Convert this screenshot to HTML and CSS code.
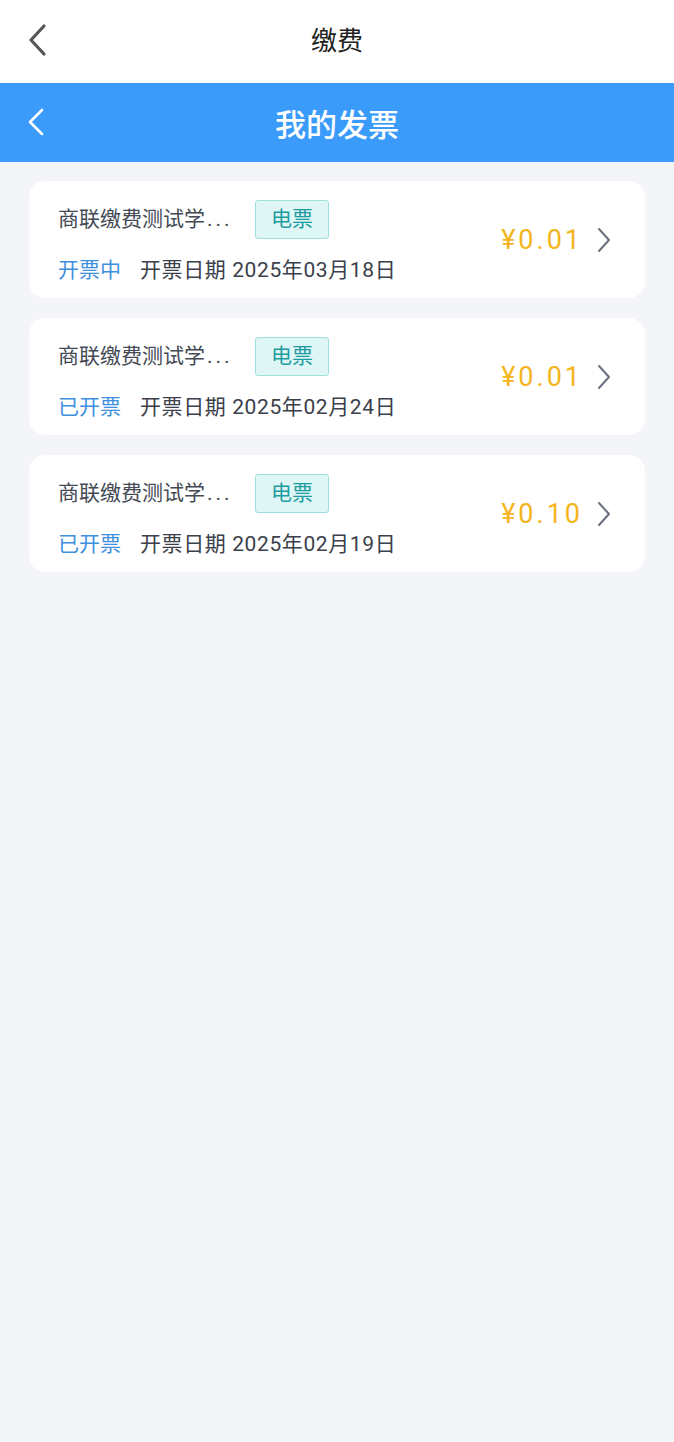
FILE: index.html
```html
<!DOCTYPE html>
<html lang="zh-CN">
<head>
    <meta charset="UTF-8">
    <meta name="viewport" content="width=device-width, initial-scale=1.0">
    <title>我的发票</title>
    <link rel="stylesheet" href="styles.css">
</head>
<body>
    <div class="top-bar">
        <svg class="back" width="22" height="34" viewBox="0 0 22 34"><path d="M18 3 L5 17 L18 31" fill="none" stroke="#555" stroke-width="3.2" stroke-linecap="round" stroke-linejoin="round"/></svg>
        <div class="top-title">缴费</div>
    </div>
    <div class="header">
        <svg class="back" width="22" height="30" viewBox="0 0 22 30"><path d="M17 3 L5 15 L17 27" fill="none" stroke="#fff" stroke-width="2.6" stroke-linecap="round" stroke-linejoin="round"/></svg>
        <div class="header-title">我的发票</div>
    </div>
    <div class="list">
        <div class="card">
            <div class="info">
                <div class="row first">
                    <span class="name">商联缴费测试学<span class="dots">...</span></span>
                    <span class="tag">电票</span>
                </div>
                <div class="row">
                    <span class="status">开票中</span>
                    <span class="date">开票日期 2025年03月18日</span>
                </div>
            </div>
            <div class="amount">¥0.01</div>
            <svg class="arrow" width="14" height="26" viewBox="0 0 14 26"><path d="M2 2 L12 13 L2 24" fill="none" stroke="#6b7080" stroke-width="2" stroke-linecap="round" stroke-linejoin="round"/></svg>
        </div>
        <div class="card">
            <div class="info">
                <div class="row first">
                    <span class="name">商联缴费测试学<span class="dots">...</span></span>
                    <span class="tag">电票</span>
                </div>
                <div class="row">
                    <span class="status">已开票</span>
                    <span class="date">开票日期 2025年02月24日</span>
                </div>
            </div>
            <div class="amount">¥0.01</div>
            <svg class="arrow" width="14" height="26" viewBox="0 0 14 26"><path d="M2 2 L12 13 L2 24" fill="none" stroke="#6b7080" stroke-width="2" stroke-linecap="round" stroke-linejoin="round"/></svg>
        </div>
        <div class="card">
            <div class="info">
                <div class="row first">
                    <span class="name">商联缴费测试学<span class="dots">...</span></span>
                    <span class="tag">电票</span>
                </div>
                <div class="row">
                    <span class="status">已开票</span>
                    <span class="date">开票日期 2025年02月19日</span>
                </div>
            </div>
            <div class="amount">¥0.10</div>
            <svg class="arrow" width="14" height="26" viewBox="0 0 14 26"><path d="M2 2 L12 13 L2 24" fill="none" stroke="#6b7080" stroke-width="2" stroke-linecap="round" stroke-linejoin="round"/></svg>
        </div>
    </div>
</body>
</html>
```

FILE: styles.css
```css
body {
    margin: 0;
    min-height: 1442px;
    background-color: #f3f5f9;
    font-family: "Roboto", "Noto Sans CJK SC", sans-serif;
}
.top-bar {
    position: relative;
    height: 83px;
    background-color: #fff;
    display: flex;
    align-items: center;
    justify-content: center;
}
.top-bar .back {
    position: absolute;
    left: 26px;
    top: 23px;
}
.top-title {
    font-family: "DejaVu Serif", "Noto Sans CJK SC", serif;
    font-size: 26px;
    color: #222;
    margin-bottom: 6px;
}
.header {
    position: relative;
    height: 79px;
    background-color: #3a9bfb;
    display: flex;
    align-items: center;
    justify-content: center;
}
.header .back {
    position: absolute;
    left: 25px;
    top: 24px;
}
.header-title {
    font-size: 31px;
    font-weight: 500;
    color: #fff;
}
.list {
    padding: 19px 29px;
    display: flex;
    flex-direction: column;
    gap: 20px;
}
.card {
    height: 117px;
    background-color: #fff;
    border-radius: 16px;
    display: flex;
    align-items: center;
    padding: 0 34px 0 29px;
}
.info {
    flex: 1;
    display: flex;
    flex-direction: column;
    gap: 15px;
    margin-top: 2px;
}
.row {
    display: flex;
    align-items: center;
    height: 28px;
}
.row.first {
    height: 39px;
}
.name {
    font-size: 21px;
    color: #444a55;
    width: 197px;
    margin-top: -4px;
}
.dots {
    letter-spacing: 3px;
    margin-left: 2px;
}
.tag {
    font-size: 21px;
    color: #1c9c9e;
    background-color: #dff6f6;
    border: 1px solid #9fe0df;
    border-radius: 3px;
    padding: 0 15px;
    height: 37px;
    line-height: 37px;
}
.status {
    font-size: 21px;
    color: #3f8fdf;
    width: 82px;
}
.date {
    font-size: 21px;
    color: #3b404a;
    letter-spacing: 0.6px;
}
.amount {
    font-size: 27px;
    color: #f4b51c;
    letter-spacing: 3px;
    margin-right: 14px;
}
```
